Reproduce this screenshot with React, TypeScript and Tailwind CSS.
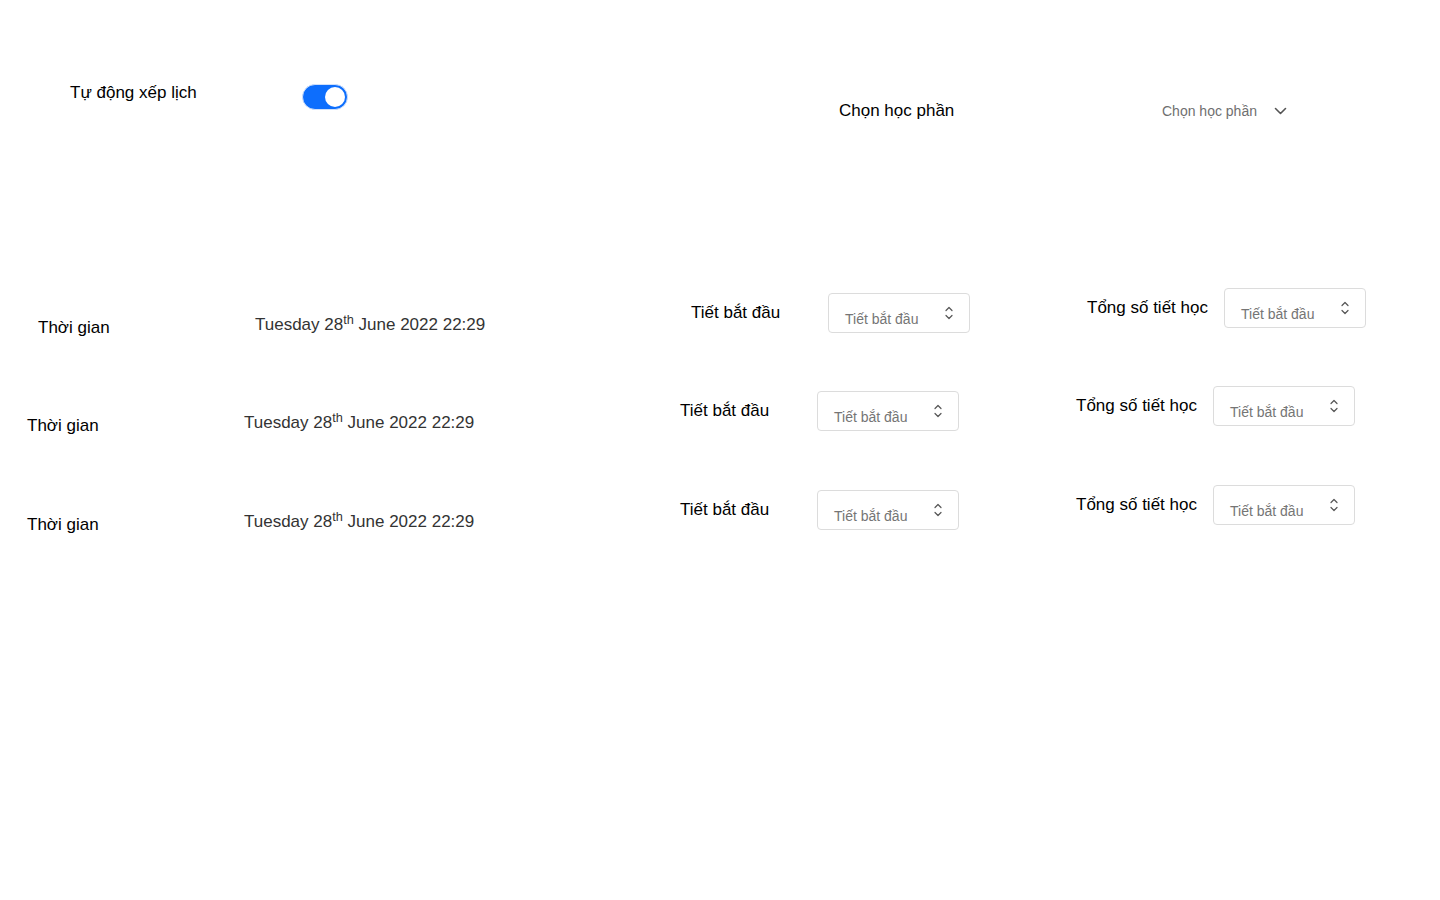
import React from "react";

const font = { fontFamily: '"Liberation Sans", Arial, sans-serif' };

const Spinner = () => (
  <svg width="8" height="14" viewBox="0 0 8 14" fill="none" stroke="#555" strokeWidth="1.2" strokeLinecap="round" strokeLinejoin="round">
    <path d="M1 4.5 L4 1.5 L7 4.5" />
    <path d="M1 9.5 L4 12.5 L7 9.5" />
  </svg>
);

const NumberBox = ({ className = "" }: { className?: string }) => (
  <div className={`flex h-[40px] w-[142px] items-center justify-between rounded-[4px] border border-[#dcdcdc] bg-white pl-[16px] pr-[16px] ${className}`}>
    <span className="mt-[13px] text-[14px] text-[#757575]">Tiết bắt đầu</span>
    <Spinner />
  </div>
);

const ScheduleRow = ({ shift }: { shift: boolean }) => (
  <div className={`flex h-[49px] items-start ${shift ? "pl-[38px]" : "pl-[27px]"}`}>
    <div className="mt-[29px] w-[217px] text-[17px] leading-[20px] text-black">Thời gian</div>
    <div className="mt-[26px] w-[436px] text-[17px] leading-[20px] text-[#333]">
      Tuesday 28<sup>th</sup> June 2022 22:29
    </div>
    <div className="mt-[14px] w-[137px] text-[17px] leading-[20px] text-black">Tiết bắt đầu</div>
    <NumberBox className="mt-[4px]" />
    <div className="ml-[117px] mt-[9px] w-[137px] text-[17px] leading-[20px] text-black">Tổng số tiết học</div>
    <NumberBox className="-mt-[1px]" />
  </div>
);

export default function App() {
  return (
    <div className="min-h-[900px] w-[1440px] bg-white" style={font}>
      <div className="flex items-start pt-[82px]">
        <div className="ml-[70px] mt-[1px] w-[232px] text-[17px] leading-[20px] text-black">Tự động xếp lịch</div>
        <button className="mt-[2px] flex h-[26px] w-[46px] items-center justify-end rounded-full border border-[#cfe0fb] bg-[#0d6efd] pr-[2px]">
          <span className="h-[20px] w-[20px] rounded-full bg-white" />
        </button>
        <div className="ml-[491px] mt-[19px] w-[323px] text-[17px] leading-[20px] text-black">Chọn học phần</div>
        <div className="mt-[19px] flex h-[20px] items-center gap-[17px]">
          <span className="text-[14px] text-[#6f6f6f]">Chọn học phần</span>
          <svg width="13" height="8" viewBox="0 0 13 8" fill="none" stroke="#555" strokeWidth="1.6" strokeLinecap="round" strokeLinejoin="round">
            <path d="M1.5 1.5 L6.5 6.5 L11.5 1.5" />
          </svg>
        </div>
      </div>

      <div className="mt-[168px] flex flex-col gap-[49px]">
        <ScheduleRow shift />
        <ScheduleRow shift={false} />
        <div className="mt-[1px]">
          <ScheduleRow shift={false} />
        </div>
      </div>
    </div>
  );
}
